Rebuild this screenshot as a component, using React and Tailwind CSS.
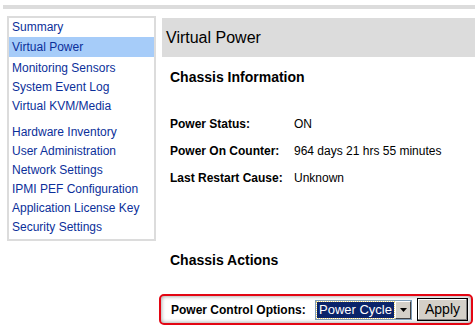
import React from "react";

const items1 = ["Summary", "Virtual Power", "Monitoring Sensors", "System Event Log", "Virtual KVM/Media"];
const items2 = ["Hardware Inventory", "User Administration", "Network Settings", "IPMI PEF Configuration", "Application License Key", "Security Settings"];

export default function App() {
  return (
    <div className="w-[475px] h-[329px] bg-white overflow-hidden relative" style={{ fontFamily: '"Liberation Sans", Arial, sans-serif' }}>
      <div className="ml-[3px] mt-[5px] h-[4px] bg-[#dcdcdc]" />
      <div className="flex items-start">
        <div className="ml-[7px] mt-[7px] w-[149px] border-2 border-[#dcdcdc] pb-[2px] text-[12px] text-[#0b2f9a]">
          <div className="h-[19px] leading-[19px] pl-[3px]">Summary</div>
          <div className="h-[20px] leading-[20px] pl-[3px] bg-[#a6ccf9]">Virtual Power</div>
          <div className="mt-[2px]">
            {items1.slice(2).map((t) => (
              <div key={t} className="h-[19px] leading-[19px] pl-[3px]">{t}</div>
            ))}
          </div>
          <div className="mt-[7px]">
            {items2.map((t) => (
              <div key={t} className="h-[19px] leading-[19px] pl-[3px]">{t}</div>
            ))}
          </div>
        </div>
        <div className="ml-[6px] mt-[9px] flex-1">
          <div className="h-[39px] bg-[#dcdcdc] pl-[4px] flex items-center text-[16px] text-black">Virtual Power</div>
          <div className="pl-[8px] text-black">
            <div className="mt-[11px] h-[18px] leading-[18px] text-[14px] font-bold">Chassis Information</div>
            <div className="mt-[24px] text-[12px]">
              {[
                ["Power Status:", "ON"],
                ["Power On Counter:", "964 days 21 hrs 55 minutes"],
                ["Last Restart Cause:", "Unknown"],
              ].map(([k, v]) => (
                <div key={k} className="flex h-[27px] items-center">
                  <div className="w-[124px] font-bold">{k}</div>
                  <div>{v}</div>
                </div>
              ))}
            </div>
            <div className="mt-[60px] h-[18px] leading-[18px] text-[14px] font-bold">Chassis Actions</div>
          </div>
          <div className="mt-[25px] ml-[-3px] mr-[2px] h-[31px] border-2 border-[#e30613] rounded-[5px] shadow-[inset_0_0_4px_rgba(0,0,0,0.45)] flex items-center pl-[10px] text-[12px]">
            <div className="w-[144px] font-bold">Power Control Options:</div>
            <div className="flex h-[20px] w-[97px] border border-[#7f9db9] bg-white">
              <div className="flex-1 m-[1px] bg-[#0a246a] text-white text-[13px] leading-[16px] pl-[2px] outline-1 outline-dotted outline-[#e8d070] whitespace-nowrap">Power Cycle</div>
              <div className="w-[16px] bg-[#d4d0c8] border border-t-white border-l-white border-r-[#404040] border-b-[#404040] flex items-center justify-center">
                <svg width="7" height="4" viewBox="0 0 7 4"><path d="M0 0h7L3.5 4z" fill="#000" /></svg>
              </div>
            </div>
            <div className="ml-[5px] h-[23px] w-[51px] border border-black bg-[#d4d0c8] flex items-center justify-center text-[14px] shadow-[inset_-1px_-1px_0_#808080,inset_1px_1px_0_#ffffff]">Apply</div>
          </div>
        </div>
      </div>
    </div>
  );
}
